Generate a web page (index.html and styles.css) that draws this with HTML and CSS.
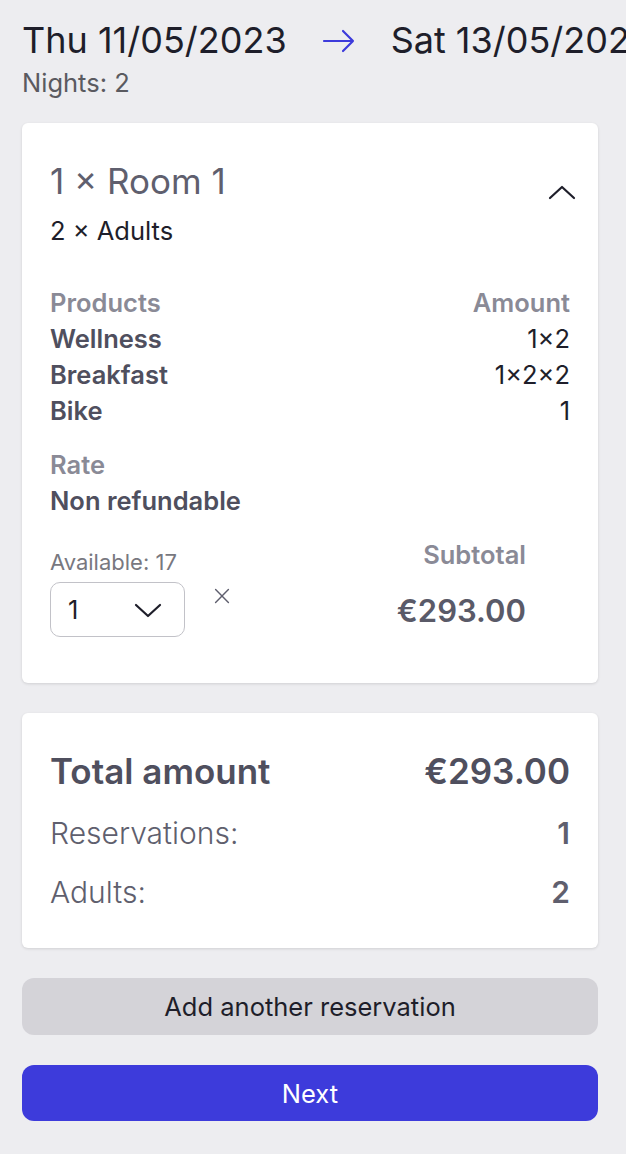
FILE: index.html
```html
<!DOCTYPE html>
<html lang="en">

<head>
    <meta charset="UTF-8">
    <meta name="viewport" content="width=device-width, initial-scale=1.0">
    <title>Reservation Summary</title>
    <link rel="stylesheet" href="styles.css">
</head>

<body>

    <!-- Stay dates -->
    <header class="stay">
        <div class="stay-dates">
            <span>Thu 11/05/2023</span>
            <svg class="arrow" width="34" height="24" viewBox="0 0 34 24">
                <path d="M2 12 H31 M21 2 L31 12 L21 22" fill="none" stroke="#3d3bdb" stroke-width="2.2" stroke-linecap="round" stroke-linejoin="round" />
            </svg>
            <span>Sat 13/05/2023</span>
        </div>
        <p class="nights">Nights: 2</p>
    </header>

    <!-- Room card -->
    <section class="card room">
        <div class="room-head">
            <div>
                <h2 class="room-title">1 × Room 1</h2>
                <p class="room-guests">2 × Adults</p>
            </div>
            <svg class="chevron-up" width="28" height="16" viewBox="0 0 28 16">
                <path d="M2 14 L14 3 L26 14" fill="none" stroke="#1e1e2a" stroke-width="2.2" stroke-linecap="round" stroke-linejoin="round" />
            </svg>
        </div>

        <div class="products">
            <div class="row label">
                <span>Products</span>
                <span>Amount</span>
            </div>
            <div class="row">
                <span class="name">Wellness</span>
                <span class="qty">1×2</span>
            </div>
            <div class="row">
                <span class="name">Breakfast</span>
                <span class="qty">1×2×2</span>
            </div>
            <div class="row">
                <span class="name">Bike</span>
                <span class="qty">1</span>
            </div>
        </div>

        <div class="rate">
            <p class="label">Rate</p>
            <p class="name">Non refundable</p>
        </div>

        <div class="room-foot">
            <div class="picker">
                <p class="available">Available: 17</p>
                <div class="picker-row">
                    <div class="select">
                        <span>1</span>
                        <svg width="28" height="16" viewBox="0 0 28 16">
                            <path d="M2 3 L14 14 L26 3" fill="none" stroke="#1e1e2a" stroke-width="2.2" stroke-linecap="round" stroke-linejoin="round" />
                        </svg>
                    </div>
                    <svg class="remove" width="20" height="20" viewBox="0 0 20 20">
                        <path d="M2 2 L18 18 M18 2 L2 18" fill="none" stroke="#5f5f6e" stroke-width="1.8" stroke-linecap="round" />
                    </svg>
                </div>
            </div>
            <div class="subtotal">
                <p class="label">Subtotal</p>
                <p class="subtotal-value">€293.00</p>
            </div>
        </div>
    </section>

    <!-- Totals card -->
    <section class="card totals">
        <div class="total-row main">
            <span>Total amount</span>
            <span>€293.00</span>
        </div>
        <div class="total-row">
            <span>Reservations:</span>
            <strong>1</strong>
        </div>
        <div class="total-row">
            <span>Adults:</span>
            <strong>2</strong>
        </div>
    </section>

    <!-- Actions -->
    <button class="btn btn-secondary">Add another reservation</button>
    <button class="btn btn-primary">Next</button>

</body>

</html>
```

FILE: styles.css
```css
/* General Styles */
body {
    font-family: Inter, "Noto Sans", sans-serif;
    margin: 0;
    padding: 0 28px 0 22px;
    background-color: #ededf0;
    color: #1e1e2a;
    width: 576px;
    overflow: hidden;
}

p,
h2 {
    margin: 0;
}

/* Stay dates */
.stay {
    padding-top: 20px;
}

.stay-dates {
    display: flex;
    align-items: center;
    gap: 35px;
    font-size: 36px;
    white-space: nowrap;
    line-height: 40px;
}

.stay-dates > * {
    flex-shrink: 0;
}

.arrow {
    margin-top: 1px;
}

.nights {
    font-size: 25.5px;
    color: #5a5a60;
    line-height: 30px;
    margin-top: 8px;
}

/* Cards */
.card {
    background-color: white;
    border-radius: 6px;
    box-shadow: 0 1px 3px rgba(0, 0, 0, 0.12);
    padding: 0 28px;
}

.room {
    margin-top: 25px;
    padding-top: 38px;
    padding-bottom: 46px;
}

.room-head {
    display: flex;
    justify-content: space-between;
    align-items: flex-start;
}

.room-title {
    font-size: 35px;
    font-weight: 400;
    color: #5f5f6e;
    line-height: 40px;
}

.room-guests {
    font-size: 25.5px;
    line-height: 30px;
    margin-top: 15px;
}

.chevron-up {
    margin-top: 23px;
    margin-right: -6px;
}

.label {
    color: #8a8a96;
    font-weight: 600;
}

.name {
    color: #4f4f5e;
    font-weight: 600;
}

.products {
    margin-top: 39px;
    font-size: 25.5px;
}

.row {
    display: flex;
    justify-content: space-between;
    line-height: 36px;
}

.qty {
    color: #1e1e2a;
}

.rate {
    margin-top: 18px;
    font-size: 25.5px;
    line-height: 36px;
}

.room-foot {
    display: flex;
    justify-content: space-between;
    margin-top: 29px;
    padding-right: 44px;
}

.available {
    font-size: 22px;
    color: #78787f;
    line-height: 28px;
}

.picker-row {
    display: flex;
    align-items: flex-start;
    gap: 29px;
    margin-top: 6px;
}

.select {
    display: flex;
    align-items: center;
    justify-content: space-between;
    width: 135px;
    height: 55px;
    box-sizing: border-box;
    padding: 0 22px 0 17px;
    border: 1px solid #c2c2c8;
    border-radius: 10px;
    font-size: 25.5px;
}

.remove {
    margin-top: 6px;
    width: 16px;
    height: 16px;
}

.subtotal {
    text-align: right;
}

.subtotal .label {
    font-size: 25.5px;
    line-height: 28px;
    margin-top: -7px;
}

.subtotal-value {
    font-size: 31px;
    font-weight: 600;
    color: #5a5a68;
    line-height: 36px;
    margin-top: 24px;
}

/* Totals */
.totals {
    margin-top: 30px;
    padding-top: 38px;
    padding-bottom: 38px;
}

.total-row {
    display: flex;
    justify-content: space-between;
    font-size: 30px;
    color: #5f5f6e;
    font-weight: 300;
    line-height: 36px;
    margin-top: 23px;
}

.total-row strong {
    font-weight: 600;
}

.total-row.main {
    font-size: 35px;
    font-weight: 600;
    color: #4f4f5e;
    line-height: 40px;
    margin-top: 0;
}

.total-row.main + .total-row {
    margin-top: 24px;
}

/* Buttons */
.btn {
    display: block;
    width: 100%;
    height: 57px;
    border: none;
    border-radius: 12px;
    font-family: inherit;
    font-size: 25.5px;
    cursor: pointer;
}

.btn-secondary {
    margin-top: 30px;
    background-color: #d4d3d8;
    color: #1e1e2a;
}

.btn-primary {
    margin-top: 30px;
    height: 56px;
    background-color: #3d3bdb;
    color: white;
}
```
